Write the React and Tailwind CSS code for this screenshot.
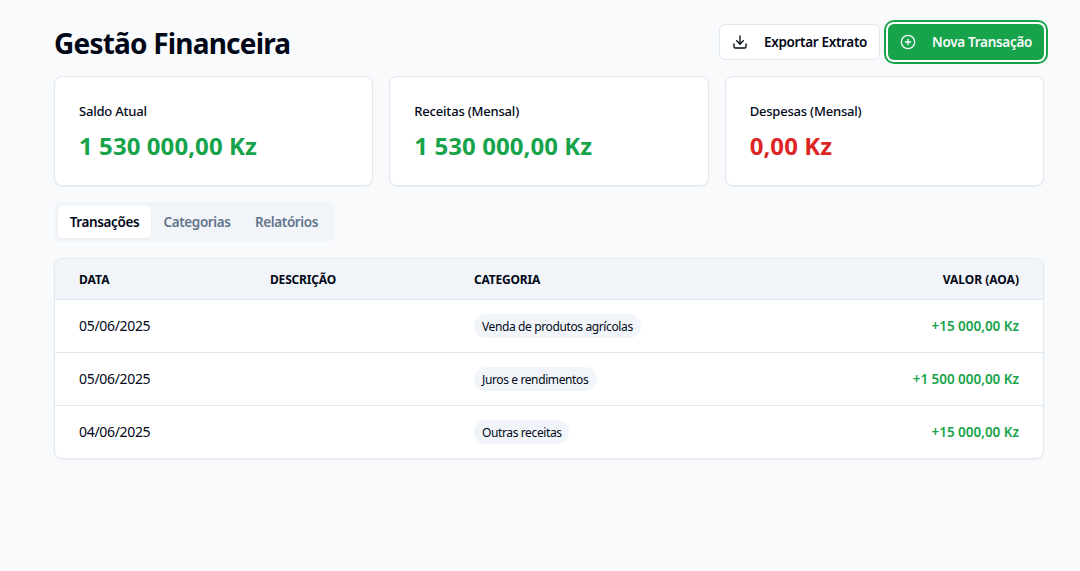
import { Download, CirclePlus } from 'lucide-react';

const SUMMARY = [
  { title: 'Saldo Atual', value: '1 530 000,00 Kz', color: 'text-[#16a34a]' },
  { title: 'Receitas (Mensal)', value: '1 530 000,00 Kz', color: 'text-[#16a34a]' },
  { title: 'Despesas (Mensal)', value: '0,00 Kz', color: 'text-[#dc2626]' },
];

const TABS = [
  { label: 'Transações', width: 'w-[93px]' },
  { label: 'Categorias', width: 'w-[92px]' },
  { label: 'Relatórios', width: 'w-[87px]' },
];

const TRANSACTIONS = [
  { date: '05/06/2025', category: 'Venda de produtos agrícolas', width: 'w-[167px]', amount: '+15 000,00 Kz' },
  { date: '05/06/2025', category: 'Juros e rendimentos', width: 'w-[123px]', amount: '+1 500 000,00 Kz' },
  { date: '04/06/2025', category: 'Outras receitas', width: 'w-[95px]', amount: '+15 000,00 Kz' },
];

function Header() {
  return (
    <header className="flex h-9 items-center justify-between">
      <h1 className="pt-0.5 text-[28px] font-bold leading-9 tracking-[-0.8px]">Gestão Financeira</h1>
      <div className="flex gap-2">
        <button className="flex h-9 w-[161px] items-center gap-4 whitespace-nowrap rounded-md border border-[#e2e8f0] bg-white px-3 text-[13.5px] font-semibold tracking-[-0.33px]">
          <Download className="size-4 shrink-0" />
          Exportar Extrato
        </button>
        <button className="flex h-9 w-[156px] items-center gap-4 whitespace-nowrap rounded-md bg-[#16a34a] px-3 text-[13.5px] font-semibold tracking-[-0.3px] text-[#f8fafc] ring-2 ring-[#16a34a] ring-offset-2 ring-offset-white">
          <CirclePlus className="size-4 shrink-0" />
          Nova Transação
        </button>
      </div>
    </header>
  );
}

function SummaryCard({ item }) {
  return (
    <div className="rounded-lg border border-[#e2e8f0] bg-white p-6 shadow-xs">
      <h3 className="text-[13px] font-medium leading-5 tracking-[-0.2px]">{item.title}</h3>
      <p className={`mt-2 h-8 pt-px text-2xl font-bold leading-8 tracking-[0.07px] ${item.color}`}>{item.value}</p>
    </div>
  );
}

function Tabs() {
  return (
    <div className="flex h-10 w-[280px] rounded-md bg-[#f1f5f9] p-1">
      {TABS.map((tab, i) => (
        <button
          key={tab.label}
          className={`${tab.width} flex h-8 items-center justify-center whitespace-nowrap rounded-sm text-[13.5px] font-semibold tracking-[-0.38px] ${
            i === 0 ? 'bg-white shadow-xs' : 'text-[#64748b]'
          }`}
        >
          {tab.label}
        </button>
      ))}
    </div>
  );
}

function TransactionsTable() {
  return (
    <div className="overflow-hidden rounded-lg border border-[#e2e8f0] bg-white shadow-xs">
      <table className="w-full table-fixed">
        <colgroup>
          <col className="w-[191px]" />
          <col className="w-[204px]" />
          <col className="w-[300px]" />
          <col />
        </colgroup>
        <thead className="bg-[#f1f5f9] text-xs">
          <tr className="h-10 border-b border-[#e2e8f0] text-left">
            <th className="px-6 pt-0.5 font-bold tracking-[0.05px]">DATA</th>
            <th className="px-6 pt-0.5 font-bold tracking-[-0.18px]">DESCRIÇÃO</th>
            <th className="px-6 pt-0.5 font-bold tracking-[-0.2px]">CATEGORIA</th>
            <th className="px-6 pt-0.5 text-right font-bold">VALOR (AOA)</th>
          </tr>
        </thead>
        <tbody>
          {TRANSACTIONS.map((t, i) => (
            <tr key={i} className="h-[53px] border-b border-[#e2e8f0] last:border-b-0">
              <td className="px-6 text-sm tracking-[-0.32px]">{t.date}</td>
              <td className="px-6" />
              <td className="px-6">
                <span className={`${t.width} flex h-6 items-center whitespace-nowrap rounded-full bg-[#f1f5f9] px-2 pt-0.5 text-xs tracking-[-0.38px]`}>
                  {t.category}
                </span>
              </td>
              <td className="px-6 pt-px text-right text-[13.5px] font-semibold tracking-[-0.03px] text-[#16a34a]">{t.amount}</td>
            </tr>
          ))}
        </tbody>
      </table>
    </div>
  );
}

export default function App() {
  return (
    <main className="flex min-h-screen flex-col gap-4 bg-[#f8fafc] py-6 pl-[54px] pr-9 font-['Noto_Sans',sans-serif] text-[#020817]">
      <Header />
      <section className="grid grid-cols-3 gap-4">
        {SUMMARY.map((item) => (
          <SummaryCard key={item.title} item={item} />
        ))}
      </section>
      <Tabs />
      <TransactionsTable />
    </main>
  );
}
